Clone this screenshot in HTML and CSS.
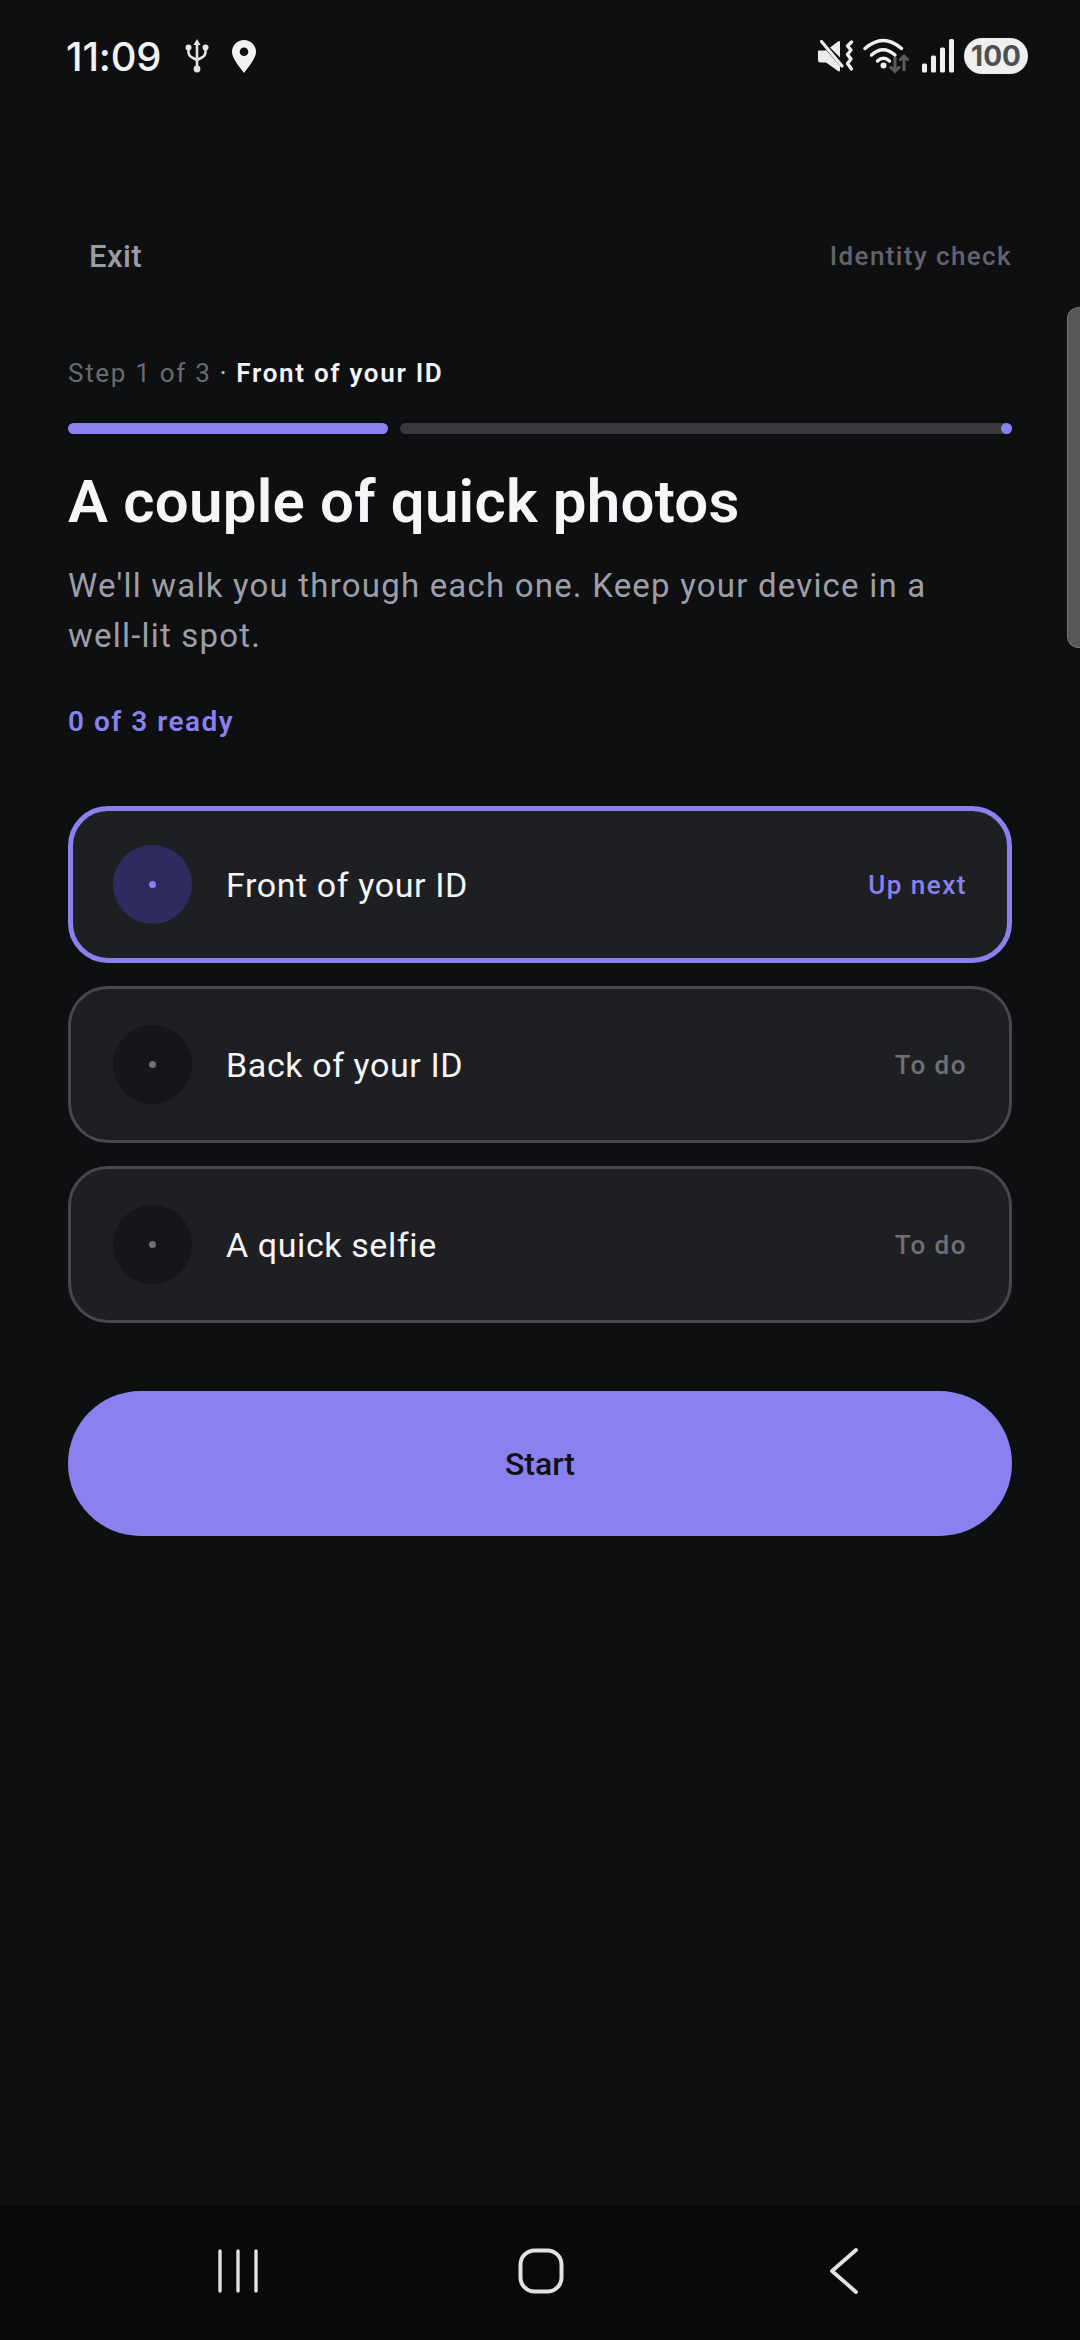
FILE: index.html
```html
<!DOCTYPE html>
<html lang="en">
<head>
<meta charset="utf-8">
<title>Identity check</title>
<link rel="stylesheet" href="styles.css">
</head>
<body>
<div class="screen">
  <div class="status">
    <div class="status-left">
      <span class="clock">11:09</span>
      <svg class="ic-usb" width="24" height="34" viewBox="0 0 24 34"><g fill="none" stroke="#e4e4e4" stroke-width="2.6" stroke-linecap="round"><path d="M12 4V30"/><path d="M3.5 9V13Q3.5 17 8 19L12 21"/><path d="M20.5 9V13Q20.5 17 16 19L12 21"/></g><g fill="#e4e4e4"><path d="M12 0L15.5 6H8.5Z"/><circle cx="3.5" cy="8.5" r="3"/><circle cx="20.5" cy="8.5" r="3"/><circle cx="12" cy="30" r="3.4"/></g></svg>
      <svg class="ic-pin" width="24" height="33" viewBox="0 0 24 33"><path fill="#f1f1f1" fill-rule="evenodd" d="M12 0C5.4 0 0 5.2 0 11.8C0 18 6.6 26 12 33C17.4 26 24 18 24 11.8C24 5.2 18.600 0 12 0ZM12 7.500A4.300 4.300 0 1 1 12 16.100A4.300 4.300 0 1 1 12 7.500Z"/></svg>
    </div>
    <div class="status-right">
      <svg class="ic-mute" width="36" height="34" viewBox="0 0 36 34"><path fill="#ececec" d="M0 11.500H7L8 11L22 27V31.500Q22 33 20 32L8 23.500H3Q0 23.500 0 21Z"/><path fill="#ececec" d="M12 8.500L20 2.500Q22 1.500 22 3V18.500Z"/><path fill="none" stroke="#ececec" stroke-width="3.200" stroke-linecap="round" d="M3.500 2.500L24 27"/><path fill="none" stroke="#ececec" stroke-width="3.400" stroke-linecap="round" stroke-linejoin="round" d="M33.500 3L29.500 7L33 11L29.500 15.500L33 20L29.500 24.500L33.500 30"/></svg>
      <svg class="ic-wifi" width="48" height="36" viewBox="0 0 48 36"><g fill="none" stroke="#f0f0f0" stroke-width="3.400" stroke-linecap="round"><path d="M2 10.500Q20 -5.500 38.500 10.500"/><path d="M8.500 17Q20 6.500 32 17"/><path d="M14.500 23Q20.500 17.500 26.500 23"/></g><circle cx="20.500" cy="27.500" r="3" fill="#f0f0f0"/><g fill="none" stroke="#5c5c5c" stroke-width="3"><path d="M32 19V33M27 28.500L32 33.500L37 28.500"/><path d="M41 33V18M36.500 22.500L41 18L45.500 22.500"/></g></svg>
      <svg class="ic-signal" width="32" height="34" viewBox="0 0 32 34"><g fill="#f0f0f0"><rect x="0" y="24.500" width="5" height="9" rx="1.500"/><rect x="9" y="16.500" width="5" height="17" rx="1.500"/><rect x="18" y="8.500" width="5" height="25" rx="1.500"/><rect x="27" y="0" width="5" height="33.500" rx="1.500"/></g></svg>
      <span class="battery">100</span>
    </div>
  </div>

  <header class="topbar">
    <span class="exit">Exit</span>
    <span class="flow-name">Identity check</span>
  </header>

  <main class="content">
    <p class="step"><span class="step-count">Step 1 of 3</span><span class="step-sep"> · </span><span class="step-name">Front of your ID</span></p>
    <div class="progress">
      <div class="seg seg-done"></div>
      <div class="seg seg-rest"><span class="seg-dot"></span></div>
    </div>
    <h1 class="title">A couple of quick photos</h1>
    <p class="lead">We'll walk you through each one. Keep your device in a <span class="nowrap">well-lit</span> spot.</p>
    <p class="ready">0 of 3 ready</p>

    <ul class="tasks">
      <li class="task task-active">
        <span class="bullet"><span class="bullet-dot"></span></span>
        <span class="task-name">Front of your ID</span>
        <span class="task-state">Up next</span>
      </li>
      <li class="task">
        <span class="bullet"><span class="bullet-dot"></span></span>
        <span class="task-name">Back of your ID</span>
        <span class="task-state">To do</span>
      </li>
      <li class="task">
        <span class="bullet"><span class="bullet-dot"></span></span>
        <span class="task-name">A quick selfie</span>
        <span class="task-state">To do</span>
      </li>
    </ul>

    <button class="start" type="button">Start</button>
  </main>

  <nav class="navbar">
    <svg width="44" height="46" viewBox="0 0 44 46"><g stroke="#e2e2e2" stroke-width="3.400" stroke-linecap="round"><path d="M4 3V43"/><path d="M22 3V43"/><path d="M40 3V43"/></g></svg>
    <svg width="46" height="46" viewBox="0 0 46 46"><rect x="2.500" y="2.500" width="41" height="41" rx="14" fill="none" stroke="#e2e2e2" stroke-width="4"/></svg>
    <svg width="30" height="46" viewBox="0 0 30 46"><path d="M27 2L3 23L27 44" fill="none" stroke="#e2e2e2" stroke-width="3.800" stroke-linecap="round" stroke-linejoin="round"/></svg>
  </nav>

  <div class="scroll-thumb"></div>
</div>
</body>
</html>
```

FILE: styles.css
```css
* { box-sizing: border-box; }
html, body { margin: 0; padding: 0; }
body {
  background: #0e0f11;
  font-family: Roboto, "Noto Sans", sans-serif;
  color: #f5f5f7;
}
.screen {
  position: relative;
  width: 1080px;
  height: 2340px;
  display: flex;
  flex-direction: column;
  overflow: hidden;
}
.status {
  height: 112px;
  padding: 36px 52px 0 66px;
  display: flex;
  justify-content: space-between;
  align-items: flex-start;
}
.status-left, .status-right { display: flex; align-items: center; height: 40px; }
.clock { font-family: Inter, sans-serif; font-size: 40px; font-weight: 500; color: #f2f2f2; letter-spacing: -0.2px; }
.ic-usb { margin-left: 24px; }
.ic-pin { margin-left: 23px; }
.ic-wifi { margin-left: 9px; }
.ic-signal { margin-left: 11px; }
.battery {
  margin-left: 10px;
  width: 64px;
  height: 36px;
  border-radius: 18px;
  background: #efefef;
  color: #4f4f52;
  font-family: Inter, sans-serif;
  font-size: 28px;
  font-weight: 700;
  display: flex;
  align-items: center;
  justify-content: center;
}
.topbar {
  margin-top: 128px;
  padding: 0 68px 0 89px;
  height: 32px;
  display: flex;
  justify-content: space-between;
  align-items: center;
}
.exit { font-size: 31px; font-weight: 500; color: #9b9ba4; letter-spacing: 0.4px; }
.flow-name { font-size: 26px; font-weight: 500; color: #63646b; letter-spacing: 1.4px; }
.content { padding: 0 68px; display: flex; flex-direction: column; }
.step { margin: 85px 0 0; font-size: 26px; line-height: 32px; letter-spacing: 1.7px; }
.step-count { color: #6a6b72; }
.step-sep { color: #cfcfd4; }
.step-name { font-weight: 600; color: #f5f5f7; }
.progress { margin-top: 34px; height: 11px; display: flex; gap: 12px; }
.seg { height: 11px; border-radius: 6px; }
.seg-done { width: 320px; background: #8a80ee; }
.seg-rest { flex: 1; background: #38393c; display: flex; justify-content: flex-end; }
.seg-dot { width: 11px; height: 11px; border-radius: 50%; background: #8a80ee; }
.title { margin: 35px 0 0; font-size: 60px; line-height: 66px; font-weight: 600; color: #f5f6f8; letter-spacing: 0.2px; }
.lead { margin: 26px 0 0; font-size: 33px; line-height: 50px; color: #9d9ea8; letter-spacing: 1.2px; }
.nowrap { white-space: nowrap; }
.ready { margin: 43px 0 0; font-size: 28px; line-height: 36px; font-weight: 600; color: #8a80ee; letter-spacing: 1.5px; }
.tasks { list-style: none; margin: 66px 0 0; padding: 0; display: flex; flex-direction: column; gap: 23px; }
.task {
  height: 157px;
  padding: 0 42px;
  display: flex;
  align-items: center;
  background: #1e1f23;
  border: 3px solid #47484c;
  border-radius: 40px;
}
.task-active { border: 5px solid #8a80ee; padding: 0 40px; }
.bullet {
  width: 79px;
  height: 79px;
  border-radius: 50%;
  background: #151619;
  display: flex;
  align-items: center;
  justify-content: center;
}
.bullet-dot { width: 7px; height: 7px; border-radius: 50%; background: #6f7076; }
.task-active .bullet { background: #2e2b5e; }
.task-active .bullet-dot { background: #8a80ee; }
.task-name { margin-left: 34px; flex: 1; font-size: 34px; color: #f5f5f7; letter-spacing: 0.6px; }
.task-state { font-size: 26px; font-weight: 500; color: #6f7076; letter-spacing: 1.5px; }
.task-active .task-state { color: #8a80ee; }
.start {
  margin-top: 68px;
  height: 145px;
  border: 0;
  border-radius: 73px;
  background: #8a80ee;
  color: #101114;
  font-family: Roboto, sans-serif;
  font-size: 32px;
  font-weight: 500;
}
.navbar {
  margin-top: auto;
  height: 135px;
  background: #08090b;
  padding: 43px 85px 0 87px;
  display: grid;
  grid-template-columns: repeat(3, 1fr);
  justify-items: center;
  align-items: start;
}
.scroll-thumb {
  position: absolute;
  right: 0;
  top: 307px;
  width: 13px;
  height: 341px;
  background: #565759;
  border: 1.5px solid #77787a;
  border-right: 0;
  border-radius: 12px 0 0 12px;
}
```
